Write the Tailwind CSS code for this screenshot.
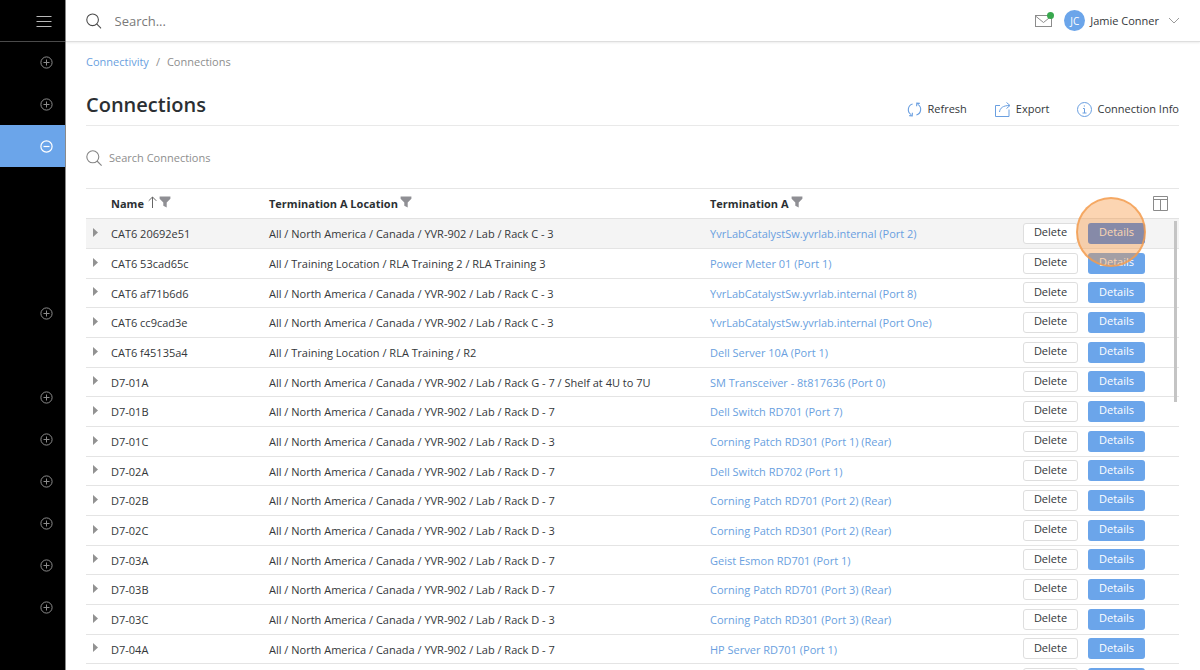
<!DOCTYPE html>
<html lang="en">
<head>
<meta charset="utf-8">
<meta name="viewport" content="width=device-width, initial-scale=1">
<title>Connections</title>
<script src="https://cdn.jsdelivr.net/npm/@tailwindcss/browser@4"></script>
</head>
<body class="flex h-screen overflow-hidden bg-white font-['Open_Sans','Noto_Sans',sans-serif] text-[11px] leading-4 text-[#34373a]">

<svg class="hidden">
  <symbol id="plus" viewBox="0 0 13 13"><g fill="none" stroke="currentColor"><circle cx="6.500" cy="6.500" r="5.600"/><path d="M3.500 6.500h6M6.500 3.500v6"/></g></symbol>
  <symbol id="minus" viewBox="0 0 13 13"><g fill="none" stroke="currentColor" stroke-width="1.200"><circle cx="6.500" cy="6.500" r="5.600"/><path d="M3.500 6.500h6"/></g></symbol>
  <symbol id="lens" viewBox="0 0 16 16"><g fill="none" stroke="currentColor" stroke-width="1.100"><circle cx="6.800" cy="6.800" r="6"/><path d="M11 11l4.600 4.600"/></g></symbol>
  <symbol id="funnel" viewBox="0 0 12 12"><path fill="currentColor" d="M.6.500h10.800v2.300L7.700 6.600v4.900L4.300 9.700V6.600L.6 2.800z"/></symbol>
</svg>

<aside class="w-[66px] shrink-0 border-r border-[#8a8a8a] bg-black text-[#8c8c8c]">
  <div class="flex h-[42px] items-center justify-end border-b border-[#4a4a4a] pr-[13px]">
    <button aria-label="Toggle menu"><svg class="h-4 w-4" viewBox="0 0 16 16"><path d="M.5 3.500h15M.5 8.500h15M.5 13.500h15" stroke="#b8b8b8" fill="none"/></svg></button>
  </div>
  <nav class="flex flex-col" aria-label="Main">
    <button aria-label="Expand section" class="flex h-[41px] items-center justify-end pr-3"><svg class="h-[13px] w-[13px]"><use href="#plus"/></svg></button>
    <button aria-label="Expand section" class="flex h-[42px] items-center justify-end pr-3"><svg class="h-[13px] w-[13px]"><use href="#plus"/></svg></button>
    <button aria-label="Collapse section" class="mb-[125px] flex h-[42px] items-center justify-end bg-[#6ba5ea] pr-3 text-white"><svg class="h-[13px] w-[13px]"><use href="#minus"/></svg></button>
    <button aria-label="Expand section" class="mb-[42px] flex h-[42px] items-center justify-end pr-3"><svg class="h-[13px] w-[13px]"><use href="#plus"/></svg></button>
    <button aria-label="Expand section" class="flex h-[42px] items-center justify-end pr-3"><svg class="h-[13px] w-[13px]"><use href="#plus"/></svg></button>
    <button aria-label="Expand section" class="flex h-[42px] items-center justify-end pr-3"><svg class="h-[13px] w-[13px]"><use href="#plus"/></svg></button>
    <button aria-label="Expand section" class="flex h-[42px] items-center justify-end pr-3"><svg class="h-[13px] w-[13px]"><use href="#plus"/></svg></button>
    <button aria-label="Expand section" class="flex h-[42px] items-center justify-end pr-3"><svg class="h-[13px] w-[13px]"><use href="#plus"/></svg></button>
    <button aria-label="Expand section" class="flex h-[42px] items-center justify-end pr-3"><svg class="h-[13px] w-[13px]"><use href="#plus"/></svg></button>
    <button aria-label="Expand section" class="flex h-[42px] items-center justify-end pr-3"><svg class="h-[13px] w-[13px]"><use href="#plus"/></svg></button>
  </nav>
</aside>

<div class="flex min-w-0 flex-1 flex-col">
  <header class="flex h-[42px] shrink-0 items-center border-b border-[#dedede] px-5 shadow-[0_1px_2px_rgba(0,0,0,0.08)]">
    <label class="flex flex-1 items-center gap-[13px]">
      <svg class="h-4 w-4 text-[#4a4a4a]"><use href="#lens"/></svg>
      <input type="search" aria-label="Search" placeholder="Search..." class="w-full text-[13px] leading-5 outline-none placeholder:text-[#7a7a7a]">
    </label>
    <button aria-label="Messages" class="relative mr-3">
      <svg class="h-3 w-[17px]" viewBox="0 0 17 12" fill="none" stroke="#8c8c8c"><rect x=".5" y=".5" width="16" height="11"/><path d="M.5 1l8 6.500 8-6.500"/></svg>
      <span class="absolute -top-[3px] -right-0.5 h-[7px] w-[7px] rounded-full bg-[#38a84e]"></span>
    </button>
    <button class="flex items-center gap-[5px]">
      <span class="flex h-[21px] w-[21px] items-center justify-center rounded-full bg-[#6ba5ea] text-[10px] text-white">JC</span>
      <span>Jamie Conner</span>
      <svg class="ml-1 h-[7px] w-3" viewBox="0 0 12 7"><path d="M1 1l5 5 5-5" fill="none" stroke="#9a9a9a"/></svg>
    </button>
  </header>

  <main class="flex min-h-0 flex-1 flex-col pr-[21px] pl-5">
    <nav aria-label="Breadcrumb" class="mt-3 flex gap-[7px] text-[#8e8e8e]">
      <a href="#" class="text-[#6a9fe0]">Connectivity</a><span>/</span><span>Connections</span>
    </nav>
    <div class="mt-[21px] flex h-[35px] items-start justify-between border-b border-[#e9e9e9]">
      <h1 class="text-[20px] leading-7 font-semibold text-[#2b2f33]">Connections</h1>
      <div class="mt-[10px] flex gap-7">
        <button class="flex items-start gap-[5px]">
          <svg class="mt-px h-[15px] w-[15px]" viewBox="0 0 15 15" fill="none" stroke="#6a9fe0" stroke-width="1.100"><path d="M5.600 2A5.800 5.800 0 0 0 4.200 12.600M2.200 13.600l3 .2.200-3M9.400 13A5.800 5.800 0 0 0 10.800 2.400M12.800 1.400l-3-.2-.2 3"/></svg>Refresh</button>
        <button class="flex items-start gap-[5px]">
          <svg class="mt-px h-[15px] w-4" viewBox="0 0 16 15" fill="none" stroke="#6a9fe0"><path d="M5 3.500H.5v11h13.500V7.500M4.500 10C5 6 8 3.500 14.500 3.500M11.500.5l3.500 3-3.500 3"/></svg>Export</button>
        <button class="flex items-start gap-[5px]">
          <svg class="mt-px h-[15px] w-[15px]" viewBox="0 0 15 15" fill="none" stroke="#6a9fe0"><circle cx="7.500" cy="7.500" r="7"/><path d="M6 6.500h1.500v4.500M5.500 11h4M6.800 4h1.200"/></svg>Connection Info</button>
      </div>
    </div>
    <label class="mt-[23px] flex items-center gap-[7px]">
      <svg class="mt-px h-4 w-4 text-[#858585]"><use href="#lens"/></svg>
      <input type="search" aria-label="Search Connections" placeholder="Search Connections" class="w-60 outline-none placeholder:text-[#8e8e8e]">
    </label>

    <div class="relative mt-[22px] min-h-0 flex-1 overflow-hidden border-t border-[#e6e6e6]">
      <table class="w-full table-fixed border-collapse text-left">
        <colgroup><col class="w-[25px]"><col class="w-[158px]"><col class="w-[441px]"><col><col class="w-[156px]"></colgroup>
        <thead>
          <tr class="h-[29px] border-b border-[#e2e2e2] font-semibold text-[#2b2f33]">
            <th></th>
            <th class="p-0"><span class="flex items-center pt-0.5">Name
              <svg class="mb-1 ml-1 h-3 w-[9px]" viewBox="0 0 9 12"><path d="M4.500 12V1M.7 4.800L4.500 1l3.800 3.800" fill="none" stroke="#666"/></svg>
              <button aria-label="Filter Name" class="mb-1 ml-0.5 text-[#8f8f94]"><svg class="h-3 w-3"><use href="#funnel"/></svg></button></span></th>
            <th class="p-0"><span class="flex items-center pt-0.5">Termination A Location
              <button aria-label="Filter Termination A Location" class="mb-1 ml-0.5 text-[#8f8f94]"><svg class="h-3 w-3"><use href="#funnel"/></svg></button></span></th>
            <th class="p-0"><span class="flex items-center pt-0.5">Termination A
              <button aria-label="Filter Termination A" class="mb-1 ml-0.5 text-[#8f8f94]"><svg class="h-3 w-3"><use href="#funnel"/></svg></button></span></th>
            <th class="py-0 pr-[11px]"><button aria-label="Choose columns" class="ml-auto block"><svg class="h-[15px] w-[15px]" viewBox="0 0 15 15"><path d="M.5.500h14v14H.5zM.5 3.500h14M7.500 3.500v11" fill="none" stroke="#8a8a8a"/></svg></button></th>
          </tr>
        </thead>
        <tbody id="rows"></tbody>
      </table>
      <div class="absolute top-8 right-0.5 h-[181px] w-[3px] bg-[#c4c4c4]"></div>
    </div>
  </main>
</div>

<script>
const NA = 'All / North America / Canada / YVR-902 / Lab / Rack ';
const data = [
  ['CAT6 20692e51', NA + 'C - 3', 'YvrLabCatalystSw.yvrlab.internal (Port 2)'],
  ['CAT6 53cad65c', 'All / Training Location / RLA Training 2 / RLA Training 3', 'Power Meter 01 (Port 1)'],
  ['CAT6 af71b6d6', NA + 'C - 3', 'YvrLabCatalystSw.yvrlab.internal (Port 8)'],
  ['CAT6 cc9cad3e', NA + 'C - 3', 'YvrLabCatalystSw.yvrlab.internal (Port One)'],
  ['CAT6 f45135a4', 'All / Training Location / RLA Training / R2', 'Dell Server 10A (Port 1)'],
  ['D7-01A', NA + 'G - 7 / Shelf at 4U to 7U', 'SM Transceiver - 8t817636 (Port 0)'],
  ['D7-01B', NA + 'D - 7', 'Dell Switch RD701 (Port 7)'],
  ['D7-01C', NA + 'D - 3', 'Corning Patch RD301 (Port 1) (Rear)'],
  ['D7-02A', NA + 'D - 7', 'Dell Switch RD702 (Port 1)'],
  ['D7-02B', NA + 'D - 7', 'Corning Patch RD701 (Port 2) (Rear)'],
  ['D7-02C', NA + 'D - 3', 'Corning Patch RD301 (Port 2) (Rear)'],
  ['D7-03A', NA + 'D - 7', 'Geist Esmon RD701 (Port 1)'],
  ['D7-03B', NA + 'D - 7', 'Corning Patch RD701 (Port 3) (Rear)'],
  ['D7-03C', NA + 'D - 3', 'Corning Patch RD301 (Port 3) (Rear)'],
  ['D7-04A', NA + 'D - 7', 'HP Server RD701 (Port 1)'],
  ['', '', '']
];
document.getElementById('rows').innerHTML = data.map(([name, loc, term], i) => `
  <tr class="h-[30px] border-b border-[#e4e4e4] whitespace-nowrap first:bg-[#f4f4f4] nth-[3n]:h-[29px]">
    <td class="p-0"><button aria-label="Expand row" class="ml-[7px] block"><svg class="mb-0.5 h-[9px] w-[5px]" viewBox="0 0 5 9"><path d="M0 0l5 4.500-5 4.500z" fill="#929292"/></svg></button></td>
    <td class="p-0 pt-0.5">${name}</td>
    <td class="p-0 pt-0.5">${loc}</td>
    <td class="p-0 pt-0.5"><a href="#" class="text-[#6a9fe0]">${term}</a></td>
    <td class="p-0"><div class="flex gap-2.5">
      <button aria-label="Delete" class="h-[21px] w-[55px] rounded-[3px] border border-[#dedede] bg-white pb-0.5 leading-4">${name && 'Delete'}</button>
      <span class="relative flex"><button aria-label="Details" class="h-[21px] w-[57px] rounded-[3px] pb-0.5 leading-4 text-white ${i ? 'bg-[#6ba5ea]' : 'bg-[#3b82ee]'}">${name && 'Details'}</button>${i ? '' : '<span class="pointer-events-none absolute -top-[26px] -left-3 z-10 h-[70px] w-[70px] rounded-full border-2 border-[#f39c4f]/80 bg-[#f7963f]/40"></span>'}</span>
    </div></td>
  </tr>`).join('');
</script>
</body>
</html>
